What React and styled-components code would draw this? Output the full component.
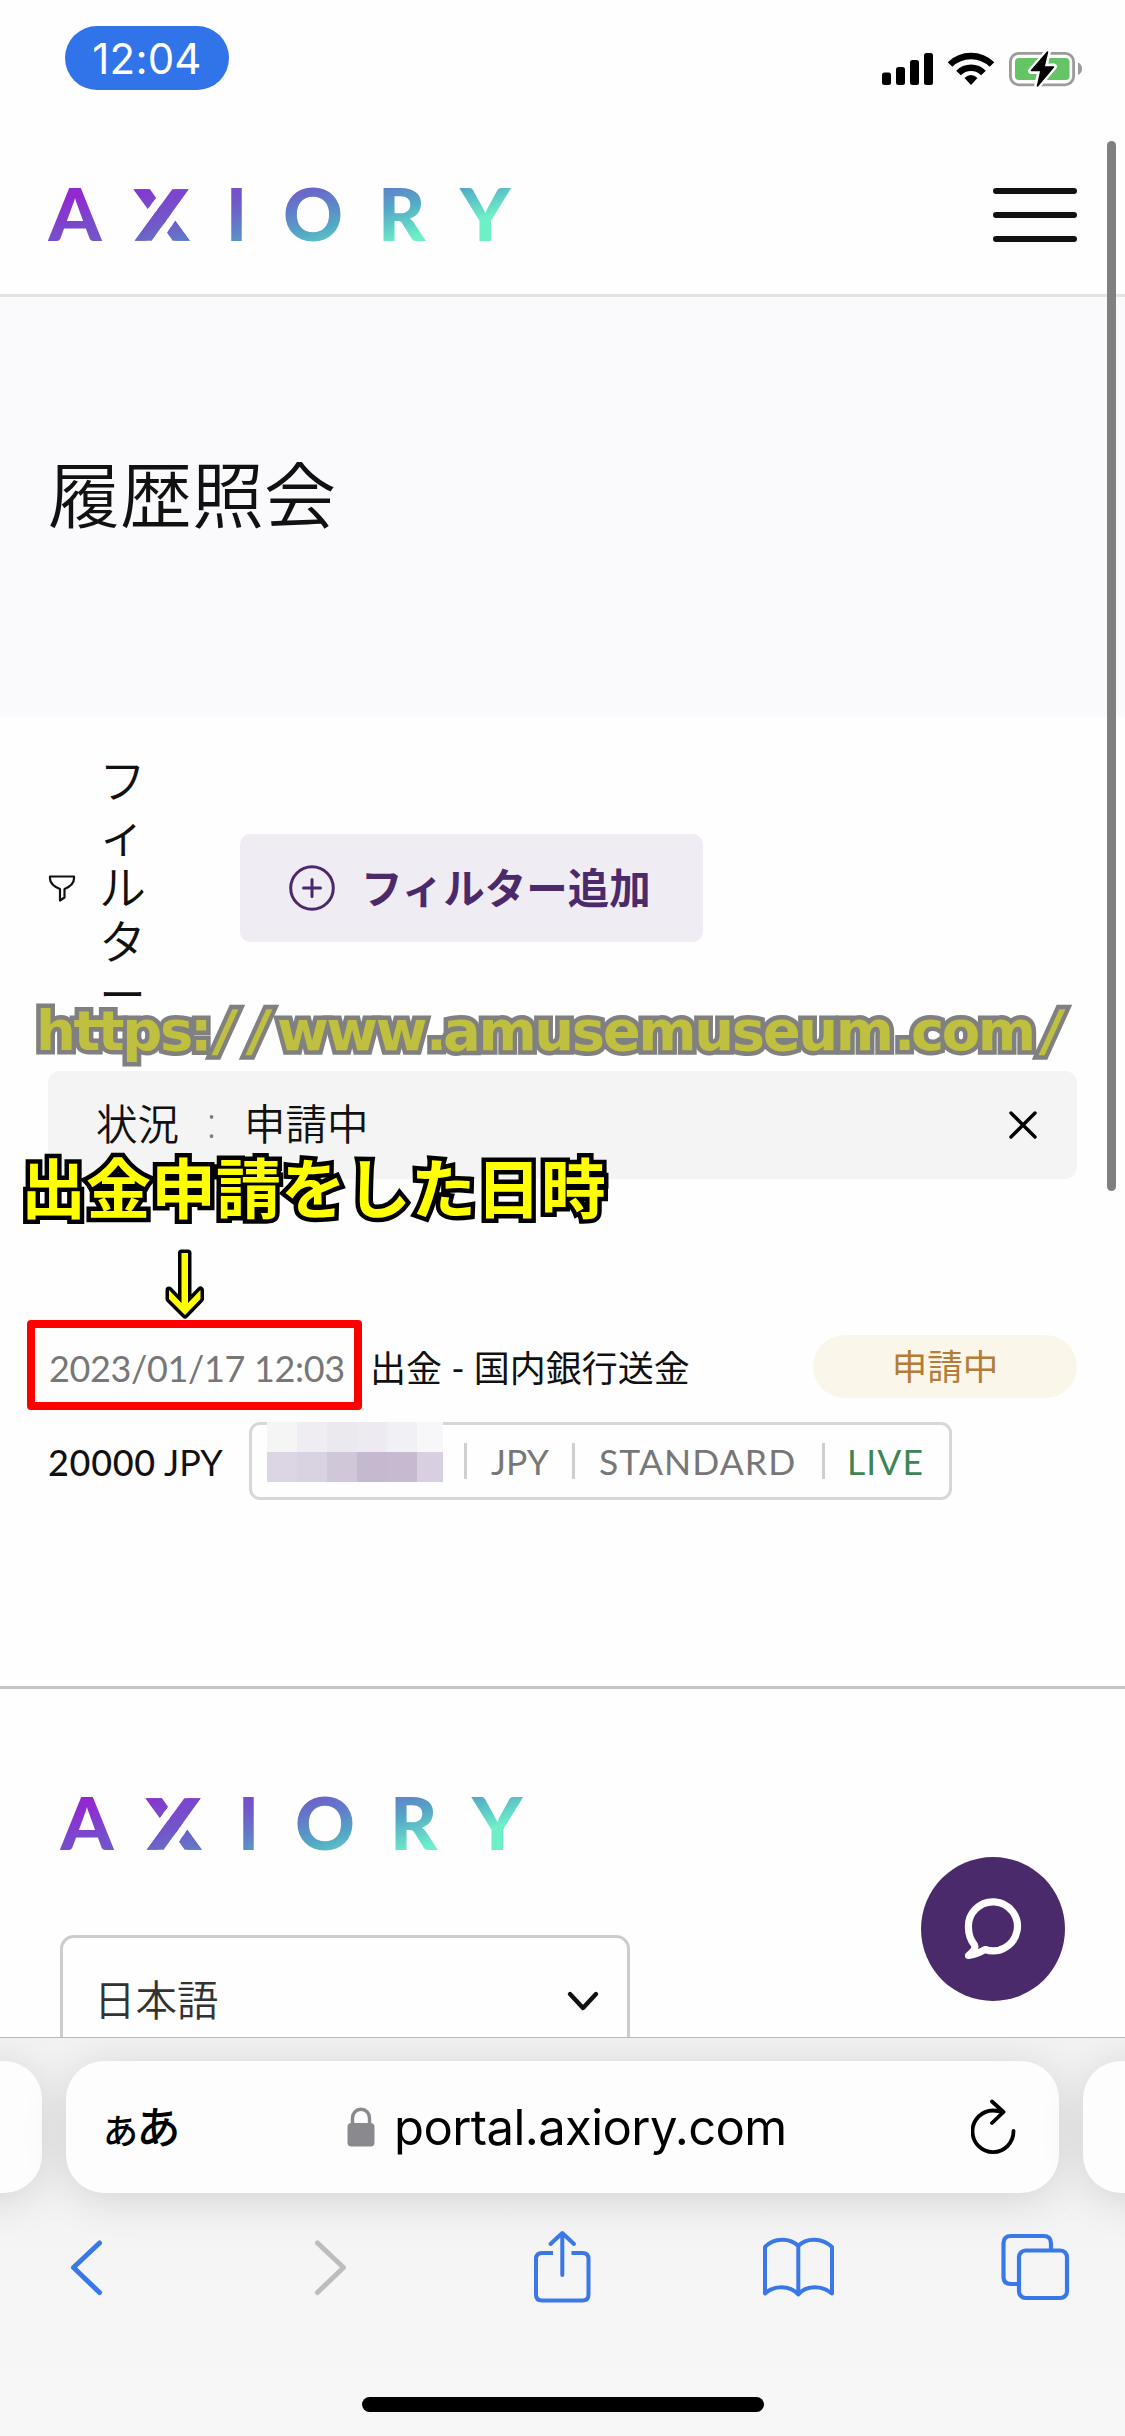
import React from "react";
import styled, { createGlobalStyle } from "styled-components";

const purple = "#4b2a6c";
const blue = "#3b78e7";
const ink = "#111";

const GlobalStyle = createGlobalStyle`
  * { box-sizing: border-box; }
  body { margin: 0; background: #fff; }
`;

const Screen = styled.div`
  position: relative;
  width: 1125px;
  height: 2436px;
  overflow: hidden;
  display: flex;
  flex-direction: column;
  background: #fefefe;
  color: ${ink};
  font-family: Lato, "Noto Sans CJK JP", sans-serif;
  white-space: nowrap;
`;

const Viewport = styled.div`
  position: relative;
  height: 2037px;
  flex: none;
  overflow: hidden;
`;

/* status bar */
const StatusBar = styled.div`
  height: 141px;
  padding: 26px 43px 0 65px;
  display: flex;
  justify-content: space-between;
  align-items: flex-start;
`;
const TimePill = styled.div`
  width: 164px;
  height: 64px;
  border-radius: 32px;
  background: #3173e8;
  color: #fff;
  font: 400 42px/65px Inter, sans-serif;
  letter-spacing: 0.2px;
  text-align: center;
`;
const StatusIcons = styled.svg`
  width: 201px;
  height: 38px;
  margin-top: 24px;
  display: block;
`;

/* header */
const Header = styled.header`
  height: 156px;
  padding: 0 48px;
  border-bottom: 3px solid #e3e3e3;
  display: flex;
  justify-content: space-between;
  align-items: flex-start;
`;
const LogoSvg = styled.svg`
  display: block;
  width: 464px;
  height: 56px;
  margin-top: ${(p) => p.$top}px;
  overflow: visible;
`;
const Menu = styled.div`
  width: 84px;
  height: 54px;
  margin-top: 47px;
  display: flex;
  flex-direction: column;
  justify-content: space-between;
`;
const MenuLine = styled.span`
  height: 6px;
  border-radius: 3px;
  background: ${ink};
`;

const Hero = styled.section`
  height: 420px;
  padding: 155px 48px 0;
  background: #fafafc;
`;
const Title = styled.h1`
  margin: 0;
  font-size: 72px;
  line-height: 84px;
  font-weight: 350;
`;

/* filters */
const Filters = styled.section`
  height: 354px;
  padding: 37px 48px 0;
  display: flex;
  align-items: flex-start;
`;
const FilterLabel = styled.div`
  height: 268px;
  width: 192px;
  display: flex;
  align-items: center;
  gap: 23px;
`;
const FilterText = styled.div`
  width: 48px;
  font-size: 47px;
  line-height: 53.4px;
  font-weight: 350;
  white-space: normal;
  word-break: break-all;
  line-break: anywhere;
`;
const AddFilter = styled.button`
  margin-top: 80px;
  width: 463px;
  height: 108px;
  padding: 0 0 0 49px;
  border: 0;
  border-radius: 10px;
  background: #f0ecf4;
  color: ${purple};
  display: flex;
  align-items: center;
  gap: 26px;
  font: 700 41.5px/60px "Noto Sans CJK JP", sans-serif;
`;
const AddLabel = styled.span`
  padding-bottom: 5px;
`;

const Chip = styled.div`
  height: 108px;
  margin: 0 48px;
  padding: 0 38px 0 48px;
  border-radius: 12px;
  background: #f4f4f4;
  display: flex;
  align-items: center;
  font-size: 41.5px;
  line-height: 60px;
  font-weight: 350;
`;
const ChipText = styled.span`
  padding-bottom: 3px;
`;
const Colon = styled.span`
  width: 65px;
  padding-bottom: 7px;
  text-align: center;
  color: #777;
  font-family: "Open Sans", sans-serif;
`;
const CloseIcon = styled.svg`
  width: 32px;
  height: 32px;
  margin-left: auto;
`;

/* transaction */
const Transaction = styled.section`
  height: 507px;
  padding: 156px 48px 0 48px;
`;
const Row = styled.div`
  height: ${(p) => p.$h}px;
  display: flex;
  align-items: center;
  font-size: 36px;
  line-height: 50px;
`;
const DateText = styled.span`
  width: 322px;
  color: #777;
  letter-spacing: -0.35px;
  padding: 3px 0 0 1px;
`;
const Kind = styled.span`
  flex: 1;
  padding-top: 2px;
  font-size: 36px;
`;
const Pending = styled.span`
  width: 264px;
  height: 63px;
  border-radius: 32px;
  background: #faf6e9;
  color: #b47c39;
  text-align: center;
  line-height: 63px;
  font-size: 35.5px;
`;
const Amount = styled.span`
  width: 201px;
  padding-top: 2px;
  color: ${ink};
  font-size: 36px;
  b { font-weight: 500; letter-spacing: 0.7px; }
`;
const Account = styled.div`
  position: relative;
  width: 703px;
  height: 78px;
  border: 3px solid #d7d7d8;
  border-radius: 11px;
  display: flex;
  align-items: center;
  padding-left: 212px;
  color: #777;
`;
const Field = styled.span`
  height: 36px;
  width: ${(p) => p.$w}px;
  border-left: 3px solid #cfcfcf;
  padding-left: ${(p) => p.$pad || 24}px;
  line-height: 37px;
  font-size: 35.5px;
  color: ${(p) => p.$color || "#777"};
  letter-spacing: ${(p) => p.$ls || 0}px;
`;
const Mosaic = styled.div`
  position: absolute;
  left: 15px;
  top: -3px;
  display: grid;
  grid-template-columns: repeat(5, 30px) 26px;
  grid-auto-rows: 30px;
`;
const Tile = styled.i`
  background: ${(p) => p.$c};
`;

/* footer */
const Footer = styled.footer`
  height: 351px;
  border-top: 3px solid #c4c4c4;
  padding: 0 60px;
`;
const Select = styled.div`
  width: 570px;
  height: 150px;
  margin-top: 81px;
  border: 3px solid #ccc;
  border-radius: 14px;
  padding: 27px 26px 0 31px;
  display: flex;
  justify-content: space-between;
  color: #333;
  font-size: 41.5px;
  line-height: 70px;
  font-weight: 350;
`;
const Chevron = styled.svg`
  width: 36px;
  height: 24px;
  margin-top: 25px;
`;

/* overlays */
const ScrollThumb = styled.div`
  position: absolute;
  left: 1107px;
  top: 141px;
  width: 9px;
  height: 1050px;
  border-radius: 5px;
  background: #808080;
`;
const ChatButton = styled.div`
  position: absolute;
  left: 921px;
  top: 1857px;
  width: 144px;
  height: 144px;
  border-radius: 50%;
  background: ${purple};
  display: grid;
  place-items: center;
`;
const Watermark = styled.div`
  position: absolute;
  left: 36px;
  top: 991px;
  display: flex;
  font: 700 56px/80px "DejaVu Sans", sans-serif;
  letter-spacing: -2.4px;
  color: #bfbf40;
  -webkit-text-stroke: 9px #808080;
  paint-order: stroke fill;
`;
const WatermarkPart = styled.span`
  flex: none;
  width: ${(p) => p.$w}px;
`;
const Slash = styled(WatermarkPart)`
  padding-left: 6px;
  transform: skewX(-8deg);
`;
const Caption = styled.div`
  position: absolute;
  left: 21px;
  top: 1135px;
  font: 700 65px/100px "Noto Sans CJK JP", sans-serif;
  color: #ff0;
  -webkit-text-stroke: 9px #000;
  paint-order: stroke fill;
`;
const Arrow = styled.svg`
  position: absolute;
  left: 160px;
  top: 1245px;
`;
const RedBox = styled.div`
  position: absolute;
  left: 27px;
  top: 1320px;
  width: 335px;
  height: 90px;
  border: 8px solid #f00;
  border-radius: 4px;
`;

/* browser chrome */
const BrowserBar = styled.div`
  flex: 1;
  border-top: 1px solid #b9b9b9;
  background: linear-gradient(#f2f2f2 0, #f3f3f3 160px, #f6f6f6 260px, #f7f7f7 100%);
  padding-top: 23px;
  overflow: hidden;
`;
const Tabs = styled.div`
  display: grid;
  grid-template-columns: 140px 993px 140px;
  gap: 24px;
  margin-left: -98px;
  height: 132px;
`;
const TabCard = styled.div`
  border-radius: 38px;
  background: #fdfdfd;
  box-shadow: 0 6px 44px rgba(0, 0, 0, 0.13);
  display: flex;
  align-items: center;
`;
const ReaderLabel = styled.span`
  width: 244px;
  margin-left: 37px;
  font-family: "Noto Sans CJK JP", sans-serif;
  font-weight: 500;
  font-size: 44px;
  line-height: 60px;
  color: #000;
  letter-spacing: -1.5px;
  small { font-size: 35px; }
`;
const Address = styled.span`
  flex: 1;
  margin-left: 19px;
  padding-top: 2px;
  font: 400 49px/64px Inter, sans-serif;
  letter-spacing: -0.6px;
  color: #000;
`;
const Tools = styled.div`
  display: grid;
  grid-template-columns: 244px 221px 229px 237.5px 72px;
  justify-content: start;
  align-items: center;
  height: 80px;
  margin-top: 34px;
  padding-left: 67px;
`;
const HomeIndicator = styled.div`
  width: 402px;
  height: 15px;
  border-radius: 8px;
  background: #000;
  margin: 90px auto 0;
`;

const glyphs = [
  ["A", 0.5, 53],
  ["I", 178, 21],
  ["O", 235, 60],
  ["R", 330, 47.5],
  ["Y", 412, 50.5],
];

function Logo({ id, top }) {
  const fill = `url(#${id})`;
  const text = {
    y: 52,
    lengthAdjust: "spacingAndGlyphs",
    fontFamily: "Lato, sans-serif",
    fontWeight: 900,
    fontSize: 71.5,
    fill,
  };
  return (
    <LogoSvg viewBox="0 0 464 56" $top={top}>
      <defs>
        <linearGradient id={id} gradientUnits="userSpaceOnUse" x1="0" y1="0" x2="40.7" y2="142">
          <stop offset=".1" stopColor="#9129d0" />
          <stop offset=".28" stopColor="#7b47cd" />
          <stop offset=".43" stopColor="#7158c9" />
          <stop offset=".61" stopColor="#6080c8" />
          <stop offset=".77" stopColor="#54a9c6" />
          <stop offset="1" stopColor="#6defc8" />
        </linearGradient>
        <clipPath id={`${id}Slits`}>
          <polygon points="86.700,51.700 103.700,51.700 140.700,.3 124.300,.3" />
          <polygon points="85.300,.3 102,.3 108,8.700 99.700,20" />
          <polygon points="127.300,31.700 142,51.700 124.700,51.700 119,43.700" />
        </clipPath>
      </defs>
      <text {...text} x={glyphs[0][1]} textLength={glyphs[0][2]}>A</text>
      <g clipPath={`url(#${id}Slits)`}>
        <text {...text} x="85" textLength="57" stroke={fill} strokeWidth="8">X</text>
      </g>
      {glyphs.slice(1).map(([c, x, w]) => (
        <text key={c} {...text} x={x} textLength={w}>{c}</text>
      ))}
    </LogoSvg>
  );
}

const tiles = [
  "#f5f5f5", "#efedf2", "#ebe9ee", "#edebf1", "#f1f0f4", "#f7f6f9",
  "#dcd6e4", "#d9d2e1", "#d0c7d9", "#c4b9cf", "#c5bad0", "#d8d0e1",
];

export default function App() {
  return (
    <Screen>
      <GlobalStyle />
      <Viewport>
        <StatusBar>
          <TimePill>12:04</TimePill>
          <StatusIcons viewBox="881 50 201 38">
            <rect x="882" y="72.500" width="9" height="12.500" rx="2.500" />
            <rect x="896" y="67" width="9" height="18" rx="2.500" />
            <rect x="910" y="60" width="9" height="25" rx="2.500" />
            <rect x="924" y="53" width="9" height="32" rx="2.500" />
            <path d="M971 85L964.500 78Q971 72 977.500 78Z" />
            <g fill="none" stroke="#000" strokeWidth="6.500">
              <path d="M958.500 73A17.500 17.500 0 0 1 983.500 73" />
              <path d="M950 64.500A30 30 0 0 1 992 64.500" />
            </g>
            <rect x="1010.400" y="53.300" width="63.200" height="31.500" rx="8.500" fill="none" stroke="#9b9b9b" strokeWidth="2.800" />
            <path d="M1078 62.500q4 1.800 4 6.200t-4 6.200z" fill="#9b9b9b" />
            <rect x="1015" y="58" width="54.500" height="22" rx="4" fill="#65c466" />
            <path d="M1048 51.500L1031 71H1040.500L1037 86.500L1054 66.500H1044.500Z" fill="#fff" stroke="#fff" strokeWidth="6" strokeLinejoin="round" />
            <path d="M1047.500 52L1031.500 70.500H1041L1037.500 86L1053.500 67H1044Z" stroke="#000" strokeWidth="1.500" strokeLinejoin="round" />
          </StatusIcons>
        </StatusBar>

        <Header>
          <Logo id="headerLogo" top={48} />
          <Menu><MenuLine /><MenuLine /><MenuLine /></Menu>
        </Header>

        <Hero><Title>履歴照会</Title></Hero>

        <Filters>
          <FilterLabel>
            <svg width="28" height="28" viewBox="0 0 28 28" fill="none" stroke="#111" strokeWidth="2.200" strokeLinejoin="round">
              <path d="M2 2.500H26V4.500Q26 11 16.500 15V23.500L12 26.500V15Q2 11 2 4.500Z" />
            </svg>
            <FilterText>フィルター</FilterText>
          </FilterLabel>
          <AddFilter>
            <svg width="46" height="46" viewBox="0 0 46 46" fill="none" stroke={purple} strokeWidth="3" strokeLinecap="round">
              <circle cx="23" cy="23" r="21.300" />
              <path d="M23 14.500V31.500M14.500 23H31.500" />
            </svg>
            <AddLabel>フィルター追加</AddLabel>
          </AddFilter>
        </Filters>

        <Chip>
          <ChipText>状況</ChipText><Colon>:</Colon><ChipText>申請中</ChipText>
          <CloseIcon viewBox="0 0 32 32" stroke="#000" strokeWidth="3.400" strokeLinecap="round">
            <path d="M4 4L28 28M28 4L4 28" />
          </CloseIcon>
        </Chip>

        <Transaction>
          <Row $h={63}>
            <DateText>2023/01/17 12:03</DateText>
            <Kind>出金 - 国内銀行送金</Kind>
            <Pending>申請中</Pending>
          </Row>
          <Row $h={126}>
            <Amount><b>20000</b> JPY</Amount>
            <Account>
              <Mosaic>{tiles.map((c, i) => <Tile key={i} $c={c} />)}</Mosaic>
              <Field $w={108}>JPY</Field>
              <Field $w={250} $ls={1.1}>STANDARD</Field>
              <Field $w={110} $color="#3d8654" $pad={22} $ls={1.1}>LIVE</Field>
            </Account>
          </Row>
        </Transaction>

        <Footer>
          <Logo id="footerLogo" top={109} />
          <Select>
            日本語
            <Chevron viewBox="0 0 36 24" fill="none" stroke="#111" strokeWidth="4.400" strokeLinecap="round" strokeLinejoin="round">
              <path d="M5 4L18 18L31 4" />
            </Chevron>
          </Select>
        </Footer>

        <ScrollThumb />
        <ChatButton>
          <svg width="64" height="64" viewBox="961 1897 64 64" fill="none" stroke="#fff" strokeWidth="7.200" strokeLinejoin="round">
            <path d="M974.500 1945C970.500 1940 968.500 1934 968.500 1928A24.500 24.500 0 1 1 985 1949.500C980 1952.500 975 1955 968.500 1955.500C973 1952 976 1949 974.500 1945Z" />
          </svg>
        </ChatButton>
        <Watermark>
          <WatermarkPart $w={154}>https</WatermarkPart>
          <WatermarkPart $w={19}>:</WatermarkPart>
          <Slash $w={34}>/</Slash>
          <Slash $w={34}>/</Slash>
          <WatermarkPart $w={149}>www</WatermarkPart>
          <WatermarkPart $w={17}>.</WatermarkPart>
          <WatermarkPart $w={451}>amusemuseum</WatermarkPart>
          <WatermarkPart $w={17}>.</WatermarkPart>
          <WatermarkPart $w={125}>com</WatermarkPart>
          <Slash $w={34}>/</Slash>
        </Watermark>
        <Caption>出金申請をした日時</Caption>
        <Arrow width="50" height="80" viewBox="160 1245 50 80">
          <path d="M181.500 1253H188V1303L200.500 1290V1299L185 1315L169 1299V1290L181.500 1303Z" fill="#ff0" stroke="#000" strokeWidth="7" strokeLinejoin="round" paintOrder="stroke" />
        </Arrow>
        <RedBox />
      </Viewport>

      <BrowserBar>
        <Tabs>
          <TabCard />
          <TabCard>
            <ReaderLabel><small>あ</small>あ</ReaderLabel>
            <svg width="28" height="40" viewBox="0 0 28 40">
              <path d="M5.500 18V11a8.500 8.800 0 0 1 17 0V18" fill="none" stroke="#8a898e" strokeWidth="3.400" />
              <rect x=".5" y="16" width="27" height="23.500" rx="4" fill="#8a898e" />
            </svg>
            <Address>portal.axiory.com</Address>
            <svg width="88" height="60" viewBox="971 2096 88 60" fill="none" stroke="#000" strokeWidth="3.800" strokeLinecap="round" strokeLinejoin="round">
              <path d="M1003 2111.500Q998 2109.500 993 2109.500A20.500 20.800 0 1 0 1013.500 2130M992 2100.500L1003.500 2111L992 2122" />
            </svg>
          </TabCard>
          <TabCard />
        </Tabs>
        <Tools>
          <svg width="40" height="60" viewBox="67 2237 40 60" fill="none" stroke={blue} strokeWidth="5" strokeLinecap="round" strokeLinejoin="round">
            <path d="M99.500 2243L73.500 2267.500L99.500 2292.500" />
          </svg>
          <svg width="40" height="60" viewBox="311 2237 40 60" fill="none" stroke="#bdbdbd" strokeWidth="5" strokeLinecap="round" strokeLinejoin="round">
            <path d="M317.500 2243L343.500 2267.500L317.500 2292.500" />
          </svg>
          <svg width="60" height="76" viewBox="532 2228 60 76" fill="none" stroke={blue} strokeWidth="4" strokeLinecap="round" strokeLinejoin="round">
            <path d="M553 2252H542Q536 2252 536 2258V2293.500Q536 2299.500 542 2299.500H582.500Q588.500 2299.500 588.500 2293.500V2258Q588.500 2252 582.500 2252H571.500" strokeLinecap="butt" />
            <path d="M562.300 2274V2233M550.500 2243L562.300 2232L574 2243" />
          </svg>
          <svg width="74" height="64" viewBox="761 2236 74 64" fill="none" stroke={blue} strokeWidth="4" strokeLinecap="round" strokeLinejoin="round">
            <path d="M798.300 2247C790 2238.500 774 2238.500 765 2248V2294.500C774 2286 790 2286 798.300 2295.500C806 2286 822 2286 832 2294.500V2248C822 2238.500 806 2238.500 798.300 2247V2294" />
          </svg>
          <svg width="72" height="70" viewBox="998.500 2233 72 70" fill="none" stroke={blue} strokeWidth="4.200">
            <path d="M1017 2285H1010.500Q1003 2285 1003 2278V2244.500Q1003 2237 1010.500 2237H1043Q1050.500 2237 1050.500 2244.500V2251" />
            <rect x="1018.500" y="2251.500" width="48" height="47.500" rx="6.500" />
          </svg>
        </Tools>
        <HomeIndicator />
      </BrowserBar>
    </Screen>
  );
}
